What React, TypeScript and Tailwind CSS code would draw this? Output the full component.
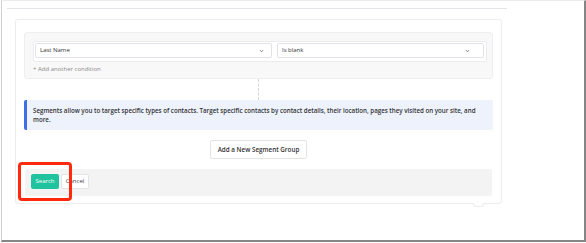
export default function App() {
  return (
    <div className="w-[586px] h-[243px] bg-white font-['Open_Sans',sans-serif] relative">
      {/* window frame */}
      <div className="ml-px w-[585px] h-[242px] border-l border-l-[#cfcfcf] border-t border-t-[#ececec] border-r-2 border-r-[#858585] border-b-2 border-b-[#858585] overflow-hidden">
        <div className="mt-[7px] ml-[5px] w-[500px] h-px bg-[#e3e3ea]" />

        {/* card */}
        <div className="relative mt-[10px] ml-[13px] w-[487px] h-[185px] border border-[#ececec] rounded-[3px] pl-[8px] pt-[12px]">
          {/* conditions */}
          <div className="w-[469px] h-[47px] bg-[#f8f8f8] border border-[#eeeeee] rounded-[3px] pl-[8px] pt-[8px]">
            <div className="w-[454px] h-[21px] bg-white border border-[#ececec] rounded-[2px] flex gap-[5px] p-px pb-[3px]">
              <div className="w-[237px] h-[15px] border border-[#e2e2ec] rounded-[2px] flex items-center justify-between pl-[4px] pr-[7px]">
                <span className="text-[6px] text-[#333]">Last Name</span>
                <Chevron />
              </div>
              <div className="w-[207px] h-[15px] border border-[#e2e2ec] rounded-[2px] flex items-center justify-between pl-[4px] pr-[13px]">
                <span className="text-[6px] text-[#333]">Is blank</span>
                <Chevron />
              </div>
            </div>
            <div className="mt-[3px] text-[6px] text-[#8a8a8a] leading-[8px]">+ Add another condition</div>
          </div>

          {/* connector */}
          <div className="ml-[234px] h-[21px] border-l border-dashed border-[#d4d4d4]" />

          {/* info */}
          <div className="w-[469px] h-[30px] bg-[#edf2fd] border-l-[3px] border-[#3d6fe3] rounded-[2px] pl-[6px] pr-[8px] pt-[7px]">
            <p className="text-[6.2px] leading-[8.5px] font-semibold text-[#333]">
              Segments allow you to target specific types of contacts. Target specific contacts by contact details, their location, pages they visited on your site, and more.
            </p>
          </div>

          <div className="mt-[10px] ml-[186px] w-[97px] h-[19px] border border-[#e4e4e4] rounded-[2px] flex items-center justify-center">
            <span className="text-[6.3px] font-semibold text-[#333]">Add a New Segment Group</span>
          </div>

          {/* footer */}
          <div className="mt-[10px] ml-px w-[467px] h-[27px] bg-[#f3f3f3] rounded-[2px] flex gap-[2px] pl-[6px] pt-[5px]">
            <div className="w-[28px] h-[15px] bg-[#1fc49e] rounded-[2px] flex items-center justify-center">
              <span className="text-[6px] text-white">Search</span>
            </div>
            <div className="w-[28px] h-[15px] bg-white border border-[#e4e4e4] rounded-[2px] flex items-center justify-center">
              <span className="text-[6px] text-[#444]">Cancel</span>
            </div>
          </div>

          <div className="absolute left-[457px] -bottom-[4px] w-[11px] h-[4px] bg-white border-x border-b border-[#ececec] rounded-b-[3px]" />
        </div>
      </div>

      {/* highlight */}
      <div className="absolute left-[18px] top-[162px] w-[54px] h-[39px] border-[3px] border-[#ff2a0d] rounded-[4px]" />
    </div>
  );
}

function Chevron() {
  return (
    <svg width="5" height="4" viewBox="0 0 5 4" fill="none">
      <path d="M1 1.2 L2.5 2.7 L4 1.2" stroke="#555" strokeWidth="0.8" />
    </svg>
  );
}
